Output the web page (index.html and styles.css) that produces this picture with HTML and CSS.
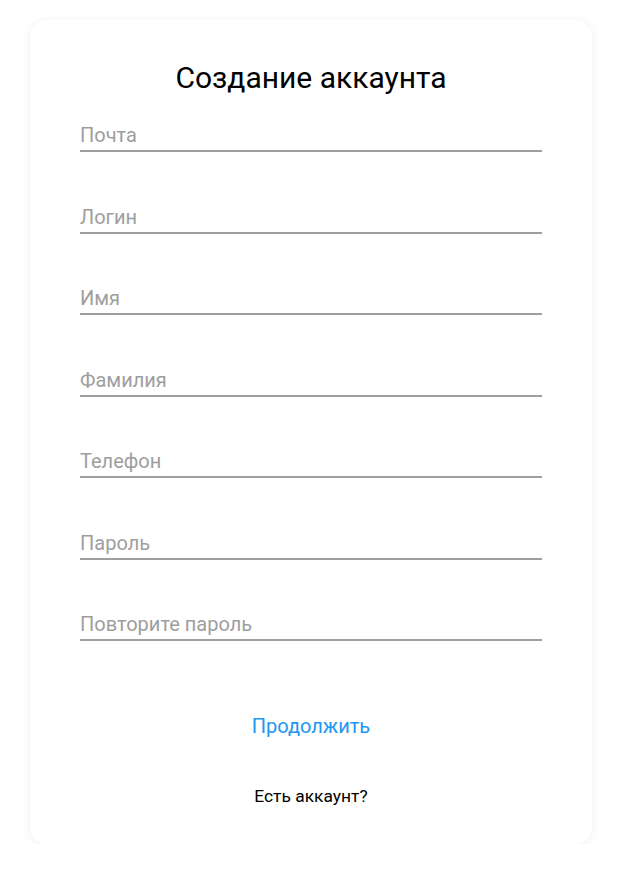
FILE: index.html
```html
<!DOCTYPE html>
<html lang="ru">
<head>
<meta charset="utf-8">
<title>Создание аккаунта</title>
<link rel="stylesheet" href="styles.css">
</head>
<body>
<div class="card">
  <h1 class="title">Создание аккаунта</h1>
  <div class="fields">
    <div class="field">Почта</div>
    <div class="field">Логин</div>
    <div class="field">Имя</div>
    <div class="field">Фамилия</div>
    <div class="field">Телефон</div>
    <div class="field">Пароль</div>
    <div class="field">Повторите пароль</div>
  </div>
  <div class="continue">Продолжить</div>
  <div class="login">Есть аккаунт?</div>
</div>
</body>
</html>
```
FILE: styles.css
```css
html, body {
  margin: 0;
  padding: 0;
  background: #ffffff;
}
body {
  font-family: Roboto, "Noto Sans", sans-serif;
}
.card {
  box-sizing: border-box;
  width: 562px;
  height: 824px;
  margin: 20px 0 0 30px;
  padding: 41px 50px 0 50px;
  background: #fff;
  border-radius: 16px;
  box-shadow: 0 1px 10px rgba(0, 0, 0, 0.07);
}
.title {
  margin: 0;
  font-size: 30px;
  line-height: 34px;
  font-weight: 400;
  color: #000;
  text-align: center;
}
.fields {
  display: flex;
  flex-direction: column;
  gap: 52.5px;
  margin-top: 28px;
}
.field {
  font-size: 20px;
  line-height: 24px;
  padding-bottom: 3px;
  color: #9e9e9e;
  border-bottom: 2px solid #9e9e9e;
}
.continue {
  margin-top: 73px;
  font-size: 20px;
  line-height: 24px;
  color: #2196f3;
  text-align: center;
}
.login {
  margin-top: 48px;
  font-size: 17.4px;
  line-height: 20px;
  color: #000;
  text-align: center;
}
```
